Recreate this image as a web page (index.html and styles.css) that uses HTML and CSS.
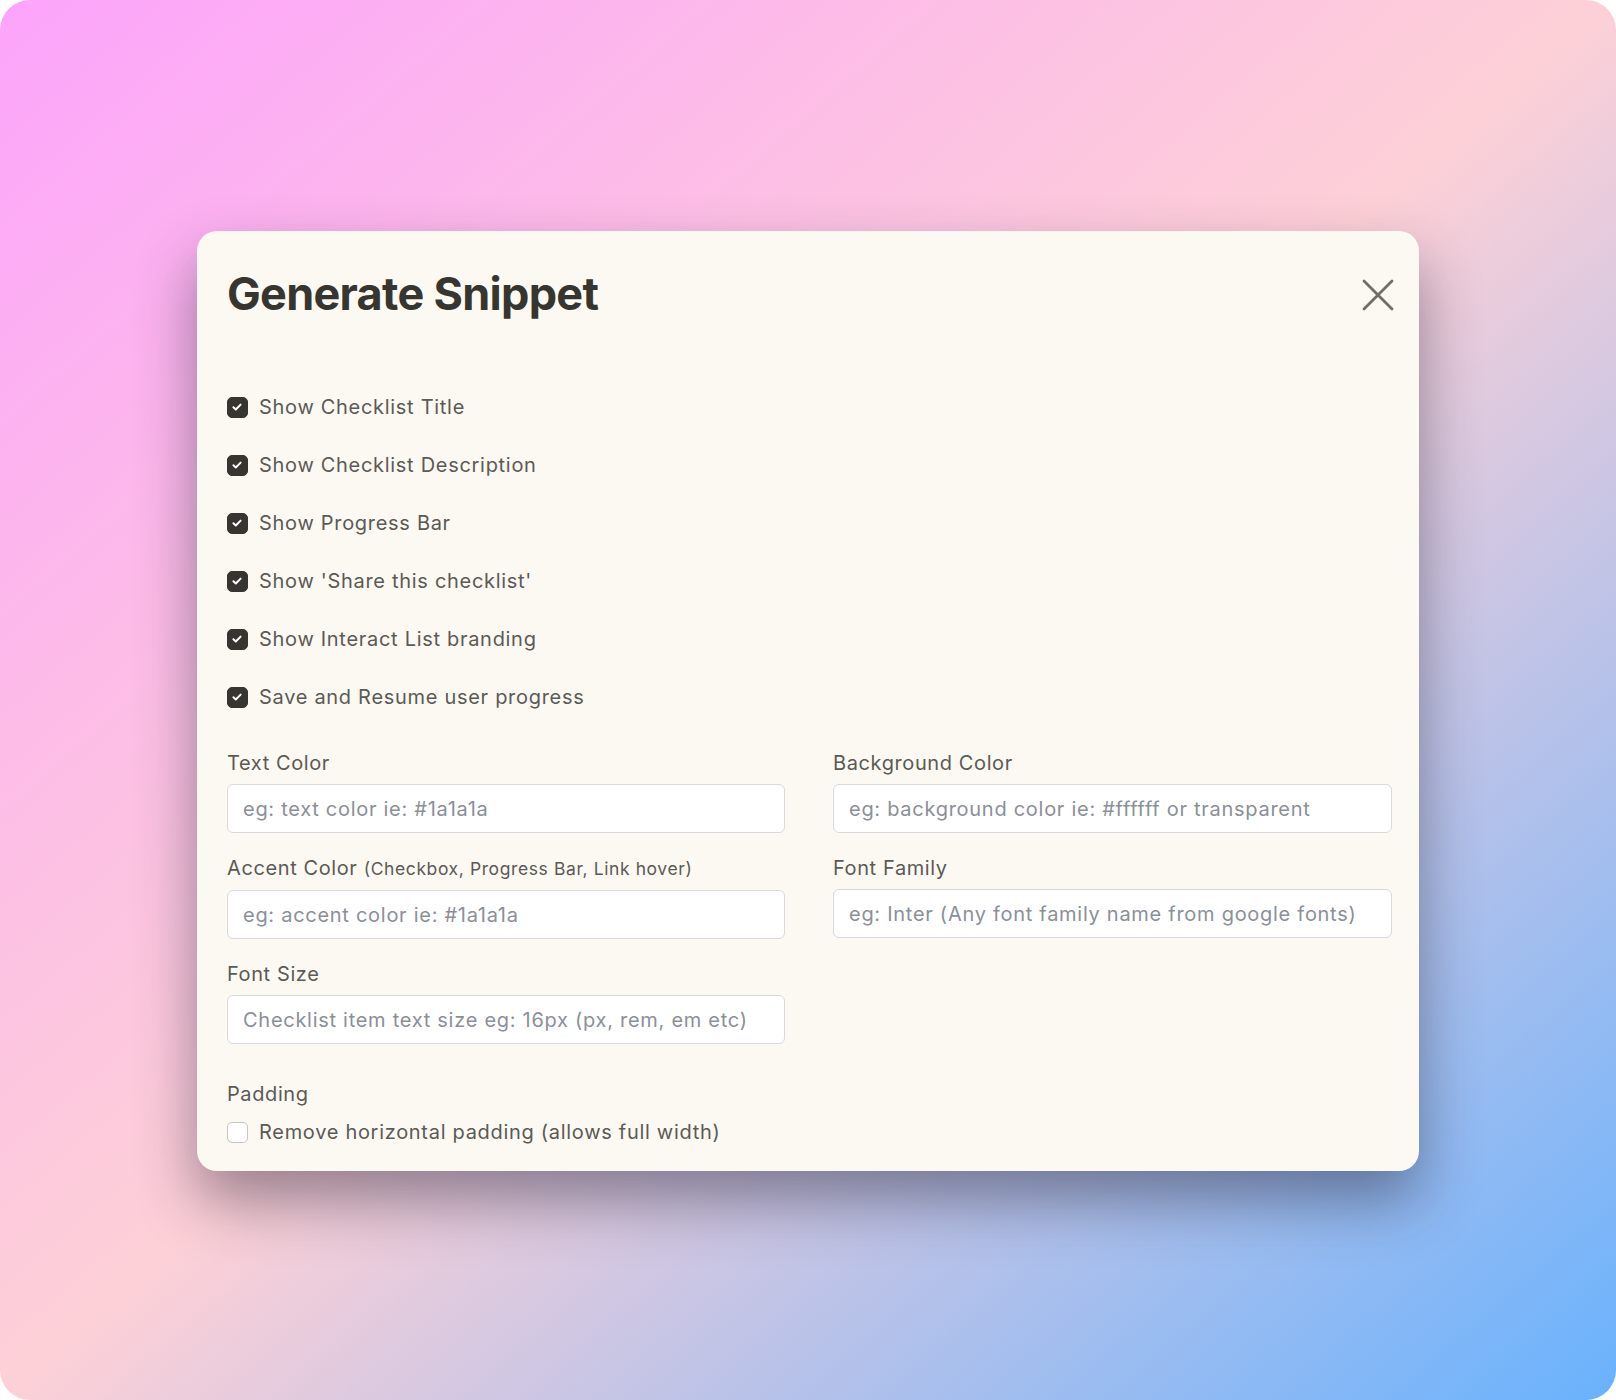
FILE: index.html
```html
<!DOCTYPE html>
<html lang="en">
<head>
    <meta charset="UTF-8">
    <meta name="viewport" content="width=device-width, initial-scale=1.0">
    <title>Generate Snippet</title>
    <link rel="stylesheet" href="styles.css">
</head>
<body>
    <div class="frame">
        <div class="modal">
            <div class="modal-header">
                <h1>Generate Snippet</h1>
                <button class="close" aria-label="Close">
                    <svg width="32" height="32" viewBox="0 0 32 32">
                        <path d="M2 2 L30 30 M30 2 L2 30" stroke="currentColor" stroke-width="2.8" stroke-linecap="round" fill="none"/>
                    </svg>
                </button>
            </div>

            <div class="options">
                <label class="check"><span class="box checked"><svg viewBox="0 0 20 20"><path d="M6 10.2 L8.7 12.8 L14 7.4" stroke="#fff" stroke-width="2.2" fill="none" stroke-linecap="round" stroke-linejoin="round"/></svg></span>Show Checklist Title</label>
                <label class="check"><span class="box checked"><svg viewBox="0 0 20 20"><path d="M6 10.2 L8.7 12.8 L14 7.4" stroke="#fff" stroke-width="2.2" fill="none" stroke-linecap="round" stroke-linejoin="round"/></svg></span>Show Checklist Description</label>
                <label class="check"><span class="box checked"><svg viewBox="0 0 20 20"><path d="M6 10.2 L8.7 12.8 L14 7.4" stroke="#fff" stroke-width="2.2" fill="none" stroke-linecap="round" stroke-linejoin="round"/></svg></span>Show Progress Bar</label>
                <label class="check"><span class="box checked"><svg viewBox="0 0 20 20"><path d="M6 10.2 L8.7 12.8 L14 7.4" stroke="#fff" stroke-width="2.2" fill="none" stroke-linecap="round" stroke-linejoin="round"/></svg></span>Show 'Share this checklist'</label>
                <label class="check"><span class="box checked"><svg viewBox="0 0 20 20"><path d="M6 10.2 L8.7 12.8 L14 7.4" stroke="#fff" stroke-width="2.2" fill="none" stroke-linecap="round" stroke-linejoin="round"/></svg></span>Show Interact List branding</label>
                <label class="check"><span class="box checked"><svg viewBox="0 0 20 20"><path d="M6 10.2 L8.7 12.8 L14 7.4" stroke="#fff" stroke-width="2.2" fill="none" stroke-linecap="round" stroke-linejoin="round"/></svg></span>Save and Resume user progress</label>
            </div>

            <div class="fields">
                <div class="field">
                    <label class="field-label" for="textColor">Text Color</label>
                    <input id="textColor" type="text" placeholder="eg: text color ie: #1a1a1a">
                </div>
                <div class="field">
                    <label class="field-label" for="bgColor">Background Color</label>
                    <input id="bgColor" type="text" placeholder="eg: background color ie: #ffffff or transparent">
                </div>
                <div class="field">
                    <label class="field-label" for="accentColor">Accent Color <small>(Checkbox, Progress Bar, Link hover)</small></label>
                    <input id="accentColor" type="text" placeholder="eg: accent color ie: #1a1a1a">
                </div>
                <div class="field">
                    <label class="field-label" for="fontFamily">Font Family</label>
                    <input id="fontFamily" type="text" placeholder="eg: Inter (Any font family name from google fonts)">
                </div>
                <div class="field">
                    <label class="field-label" for="fontSize">Font Size</label>
                    <input id="fontSize" type="text" placeholder="Checklist item text size eg: 16px (px, rem, em etc)">
                </div>
            </div>

            <div class="padding-group">
                <div class="field-label">Padding</div>
                <label class="check"><span class="box"></span>Remove horizontal padding (allows full width)</label>
            </div>
        </div>
    </div>
</body>
</html>
```

FILE: styles.css
```css
body {
    margin: 0;
    background: #ffffff;
    font-family: Inter, "Noto Sans", sans-serif;
}
.frame {
    width: 1616px;
    height: 1400px;
    box-sizing: border-box;
    padding-top: 231px;
    border-radius: 30px;
    background: linear-gradient(to bottom right, #fca4fb 0%, #fdd0d7 50%, #69b2fd 100%);
    display: flex;
    align-items: flex-start;
    justify-content: center;
}
.modal {
    width: 1222px;
    box-sizing: border-box;
    padding: 36px 27px 27px 30px;
    background: #fcf9f3;
    border-radius: 20px;
    box-shadow: 0 30px 60px rgba(30, 30, 50, 0.45);
}
.modal-header {
    display: flex;
    justify-content: space-between;
    align-items: center;
}
h1 {
    margin: 0;
    font-size: 45px;
    line-height: 54px;
    font-weight: 700;
    letter-spacing: -0.7px;
    color: #37352f;
}
.close {
    border: none;
    background: none;
    padding: 0;
    margin: 2px -2px 0 0;
    width: 32px;
    height: 32px;
    color: #6f6e69;
    cursor: pointer;
}
.close svg {
    display: block;
}
.options {
    margin-top: 74px;
    display: flex;
    flex-direction: column;
    gap: 34px;
}
.check {
    display: flex;
    align-items: center;
    font-size: 20px;
    line-height: 24px;
    letter-spacing: 0.7px;
    color: #5b5a55;
}
.box {
    width: 21px;
    height: 21px;
    box-sizing: border-box;
    border-radius: 5px;
    border: 1.5px solid #c6c5c2;
    background: #ffffff;
    margin-right: 11px;
    flex-shrink: 0;
}
.box.checked {
    background: #37352f;
    border-color: #37352f;
}
.box svg {
    display: block;
    width: 18px;
    height: 18px;
}
.fields {
    margin-top: 42px;
    display: grid;
    grid-template-columns: 558px 559px;
    column-gap: 48px;
    row-gap: 23px;
}
.field {
    display: flex;
    flex-direction: column;
}
.field-label {
    font-size: 20px;
    line-height: 24px;
    letter-spacing: 0.6px;
    color: #5b5a55;
    margin-bottom: 9px;
}
.field-label small {
    font-size: 17.5px;
    letter-spacing: 0.6px;
}
.field input {
    height: 49px;
    box-sizing: border-box;
    border: 1.5px solid #d8d9dc;
    border-radius: 6px;
    background: #ffffff;
    padding: 0 15px;
    font-family: Inter, "Noto Sans", sans-serif;
    font-size: 20px;
    letter-spacing: 0.72px;
    color: #37352f;
}
.field input::placeholder {
    color: #8b8f98;
}
.padding-group {
    margin-top: 38px;
}
.padding-group .field-label {
    margin-bottom: 14px;
}
```
